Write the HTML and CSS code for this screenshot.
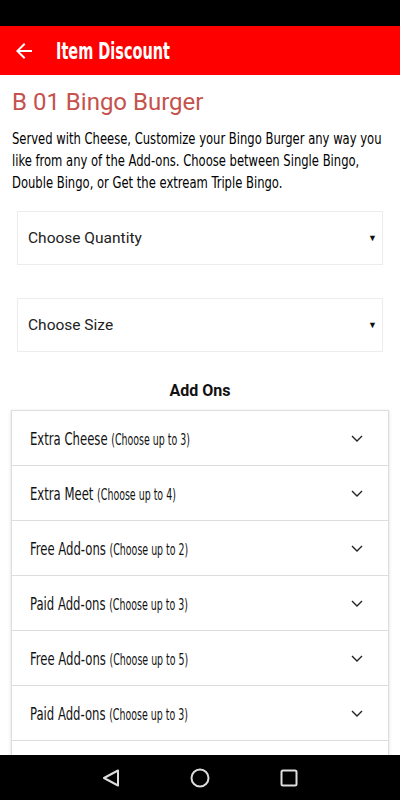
FILE: index.html
```html
<!DOCTYPE html>
<html lang="en">
<head>
<meta charset="UTF-8" />
<meta name="viewport" content="width=device-width, initial-scale=1" />
<title>Item Discount</title>
<link rel="stylesheet" href="styles.css">
</head>
<body>

<div class="status-bar"></div>

<header class="app-bar">
  <svg class="back" width="24" height="24" viewBox="0 0 24 24">
    <path d="M20 11H7.83l5.59-5.59L12 4l-8 8 8 8 1.41-1.41L7.83 13H20v-2z" fill="#fff"/>
  </svg>
  <h1 class="app-title">Item Discount</h1>
</header>

<main class="content">
  <h2 class="item-name">B 01 Bingo Burger</h2>
  <div class="desc-wrap">
    <p class="item-desc">Served with Cheese, Customize your Bingo Burger any way you like from any of the Add-ons. Choose between Single Bingo, Double Bingo, or Get the extream Triple Bingo.</p>
  </div>

  <div class="select-box">
    <span>Choose Quantity</span>
    <span class="caret">&#9660;</span>
  </div>

  <div class="select-box">
    <span>Choose Size</span>
    <span class="caret">&#9660;</span>
  </div>

  <h3 class="section-title">Add Ons</h3>

  <!-- Add-on grupper -->
  <ul class="addon-list">
    <li class="addon-row"><span class="addon-name">Extra Cheese <small>(Choose up to 3)</small></span><svg class="chev" width="14" height="14" viewBox="0 0 14 14"><path d="M2 5l5 5 5-5" stroke="#222" stroke-width="1.4" fill="none"/></svg></li>
    <li class="addon-row"><span class="addon-name">Extra Meet <small>(Choose up to 4)</small></span><svg class="chev" width="14" height="14" viewBox="0 0 14 14"><path d="M2 5l5 5 5-5" stroke="#222" stroke-width="1.4" fill="none"/></svg></li>
    <li class="addon-row"><span class="addon-name">Free Add-ons <small>(Choose up to 2)</small></span><svg class="chev" width="14" height="14" viewBox="0 0 14 14"><path d="M2 5l5 5 5-5" stroke="#222" stroke-width="1.4" fill="none"/></svg></li>
    <li class="addon-row"><span class="addon-name">Paid Add-ons <small>(Choose up to 3)</small></span><svg class="chev" width="14" height="14" viewBox="0 0 14 14"><path d="M2 5l5 5 5-5" stroke="#222" stroke-width="1.4" fill="none"/></svg></li>
    <li class="addon-row"><span class="addon-name">Free Add-ons <small>(Choose up to 5)</small></span><svg class="chev" width="14" height="14" viewBox="0 0 14 14"><path d="M2 5l5 5 5-5" stroke="#222" stroke-width="1.4" fill="none"/></svg></li>
    <li class="addon-row"><span class="addon-name">Paid Add-ons <small>(Choose up to 3)</small></span><svg class="chev" width="14" height="14" viewBox="0 0 14 14"><path d="M2 5l5 5 5-5" stroke="#222" stroke-width="1.4" fill="none"/></svg></li>
    <li class="addon-row"></li>
  </ul>
</main>

<nav class="nav-bar">
  <svg width="22" height="22" viewBox="0 0 22 22"><path d="M18 3.5L4 11l14 7.5z" stroke="#ddd" stroke-width="2" fill="none" stroke-linejoin="round"/></svg>
  <svg width="22" height="22" viewBox="0 0 22 22"><circle cx="11" cy="11" r="8.5" stroke="#ddd" stroke-width="2" fill="none"/></svg>
  <svg width="22" height="22" viewBox="0 0 22 22"><rect x="3.5" y="3.5" width="15" height="15" rx="1.5" stroke="#ddd" stroke-width="2" fill="none"/></svg>
</nav>

</body>
</html>
```

FILE: styles.css
```css
html, body {
  height: 100%;
}
body {
  margin: 0;
  font-family: Roboto, 'Noto Sans', sans-serif;
  background: #fff;
  color: #1a1a1a;
  display: flex;
  flex-direction: column;
  overflow: hidden;
}
.status-bar {
  height: 26px;
  background: #000;
  flex-shrink: 0;
}
.app-bar {
  height: 49px;
  background: #fe0000;
  display: flex;
  align-items: center;
  padding: 0 12px;
  gap: 20px;
  flex-shrink: 0;
}
/* smal skrift, som Oswald */
.app-title {
  margin: 0;
  color: #fff;
  font-family: 'DejaVu Sans Condensed', sans-serif;
  font-weight: 700;
  font-size: 23px;
  display: inline-block;
  transform: scaleX(0.7);
  transform-origin: left center;
}
.content {
  flex: 1;
  overflow: hidden;
  padding: 0 11px;
}
.item-name {
  margin: 12px 1px 11px;
  font-weight: 400;
  font-size: 24px;
  line-height: 30px;
  color: #c5524c;
}
.desc-wrap {
  margin: 0 1px 17px;
}
.item-desc {
  margin: 0;
  width: 482px;
  font-family: 'DejaVu Sans Condensed', sans-serif;
  font-size: 16.5px;
  line-height: 22px;
  color: #000;
  transform: scaleX(0.78);
  transform-origin: left top;
}
.select-box {
  height: 52px;
  margin: 0 6px 33px;
  border: 1px solid #ececec;
  display: flex;
  align-items: center;
  justify-content: space-between;
  padding: 0 5px 0 10px;
  font-size: 15.5px;
  color: #222;
}
.caret {
  font-size: 9px;
  color: #111;
}
.section-title {
  margin: -4px 0 10px;
  text-align: center;
  font-size: 16px;
  font-weight: 700;
  color: #111;
}
.addon-list {
  list-style: none;
  margin: 0;
  padding: 0;
  border: 1px solid #ddd;
  box-shadow: 0 1px 3px rgba(0, 0, 0, 0.15);
}
.addon-row {
  height: 54px;
  border-bottom: 1px solid #ddd;
  display: flex;
  align-items: center;
  justify-content: space-between;
  padding: 0 24px 0 18px;
}
.addon-name {
  display: inline-block;
  white-space: nowrap;
  font-family: 'DejaVu Sans Condensed', sans-serif;
  font-size: 18.5px;
  color: #111;
  transform: scaleX(0.7);
  transform-origin: left center;
}
.addon-name small {
  font-size: 15px;
}
.nav-bar {
  height: 45px;
  background: #000;
  flex-shrink: 0;
  display: flex;
  align-items: center;
  justify-content: center;
  gap: 67px;
}
```
